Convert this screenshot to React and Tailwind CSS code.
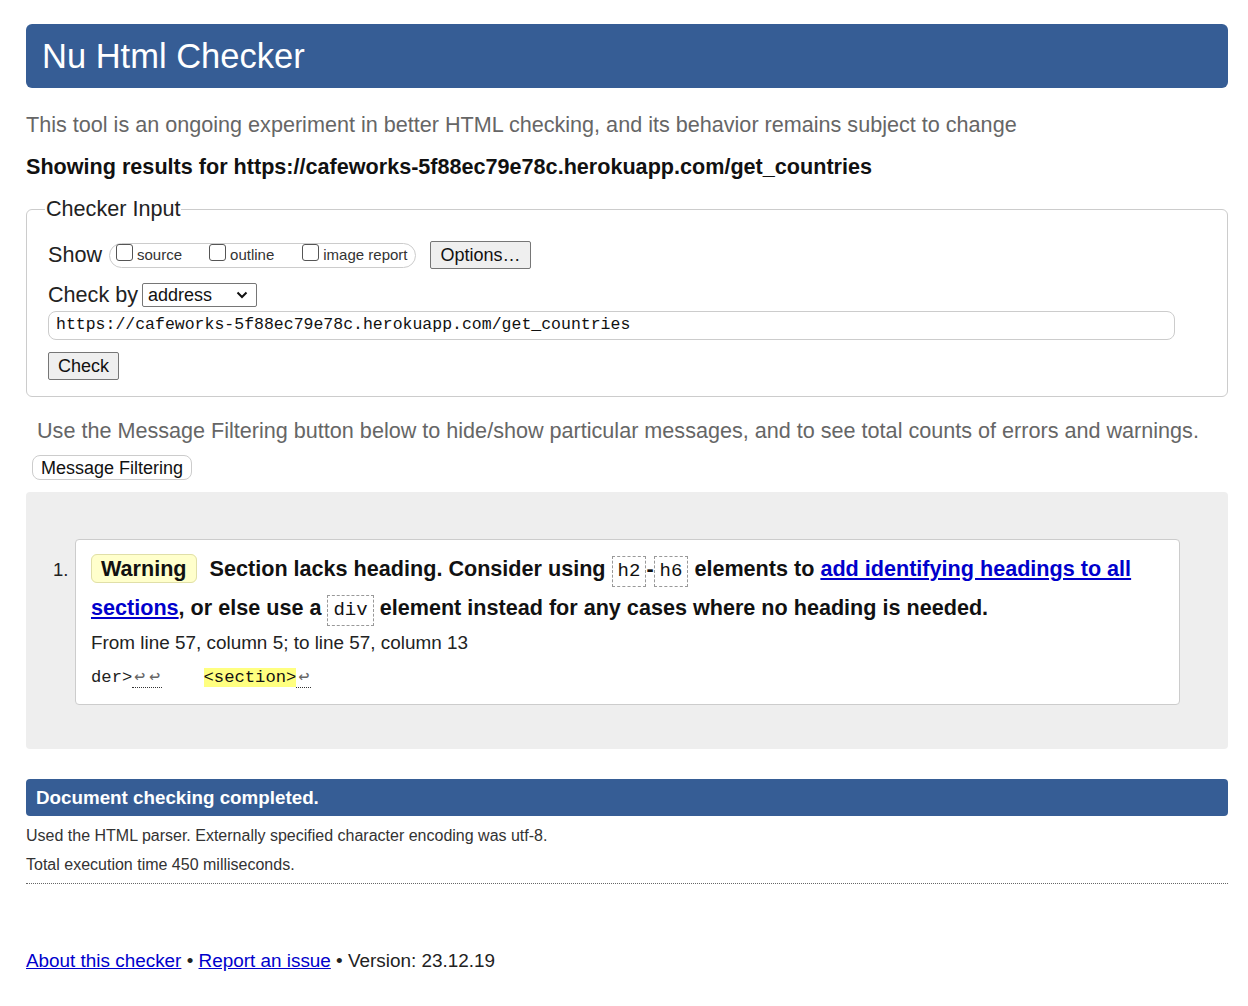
import React from "react";

const sans = { fontFamily: '"Liberation Sans", Arial, sans-serif' };

function Code({ children }) {
  return (
    <code className="inline-block border border-dashed border-[#999] bg-white px-[5px] leading-[29px] font-['Liberation_Mono',monospace] text-[19px] font-normal">
      {children}
    </code>
  );
}

function Box() {
  return <span className="mb-[5px] inline-block h-[17px] w-[17px] shrink-0 rounded-[3px] border border-[#555] bg-white" />;
}

function Ret() {
  return <span className="inline-block w-[15px] text-center text-[18px] leading-[20px] text-[#666]">↩</span>;
}

export default function App() {
  return (
    <div
      className="min-h-screen bg-white pl-[26px] pr-[20px] pt-[24px] text-[#111]"
      style={sans}
    >
      {/* Header */}
      <h1 className="h-[64px] rounded-[6px] bg-[#365d95] px-[16px] text-[34.5px] leading-[64px] text-white">
        Nu Html Checker
      </h1>

      <p className="mt-[24px] text-[21.6px] leading-[26px] text-[#666]">
        This tool is an ongoing experiment in better HTML checking, and its behavior remains subject to change
      </p>
      <p className="mt-[16px] text-[21.6px] font-bold leading-[26px] text-[#111]">
        Showing results for https://cafeworks-5f88ec79e78c.herokuapp.com/get_countries
      </p>

      {/* Checker input */}
      <fieldset className="mt-[17px] rounded-[6px] border border-[#ccc] px-[21px] pb-[16px] pt-[20px]">
        <legend className="-ml-[3px] px-[1px] text-[21.6px] leading-[24px] text-[#222]">Checker Input</legend>
        <div className="flex items-center">
          <span className="mr-[7px] text-[21.6px] leading-[26px] text-[#222]">Show</span>
          <div className="flex h-[25px] items-center rounded-full border border-[#ccc] pl-[6px] pr-[8px] text-[15px] text-[#333]">
            <label className="flex items-end gap-[4px]">
              <Box />
              <span>source</span>
            </label>
            <label className="ml-[27px] flex items-end gap-[4px]">
              <Box />
              <span>outline</span>
            </label>
            <label className="ml-[28px] flex items-end gap-[4px]">
              <Box />
              <span>image report</span>
            </label>
          </div>
          <button className="ml-[14px] h-[28px] rounded-[2px] border border-[#767676] bg-[#efefef] px-[9px] text-[18px] leading-[24px] text-[#111]">
            Options…
          </button>
        </div>
        <div className="mt-[11px] flex items-center gap-[4px]">
          <span className="text-[21.6px] leading-[30px] text-[#222]">Check by</span>
          <div className="flex h-[24px] w-[115px] items-center justify-between rounded-[2px] border border-[#767676] pl-[5px] pr-[8px] text-[18px]">
            <span>address</span>
            <svg width="12" height="8" viewBox="0 0 12 8" fill="none" stroke="#111" strokeWidth="2">
              <path d="M1.5 1.5 6 6l4.5-4.5" />
            </svg>
          </div>
        </div>
        <div className="mr-[31px] mt-[1px] flex h-[29px] items-center rounded-[8px] border border-[#ccc] px-[7px] font-['Liberation_Mono',monospace] text-[16.5px] text-[#111]">
          https://cafeworks-5f88ec79e78c.herokuapp.com/get_countries
        </div>
        <button className="mt-[12px] h-[28px] rounded-[2px] border border-[#767676] bg-[#efefef] px-[9px] text-[18px] leading-[24px] text-[#111]">
          Check
        </button>
      </fieldset>

      <p className="mt-[21px] pl-[11px] text-[21.6px] leading-[26px] text-[#666]">
        Use the Message Filtering button below to hide/show particular messages, and to see total counts of errors and warnings.
      </p>
      <button className="ml-[6px] mt-[11px] h-[25px] rounded-[8px] border border-[#ccc] bg-white px-[8px] text-[18px] leading-[22px] text-[#111]">
        Message Filtering
      </button>

      {/* Results */}
      <div className="mt-[11px] rounded-[4px] bg-[#eeeeee] pb-[44px] pl-[27px] pr-[48px] pt-[47px]">
        <div className="flex">
          <div className="w-[22px] pt-[17px] text-[18.5px] text-[#222]">1.</div>
          <div className="flex-1 rounded-[4px] border border-[#ccc] bg-white pb-[14px] pl-[15px] pr-[20px] pt-[9px]">
            <p className="text-[21.6px] font-bold leading-[39px] text-[#111]">
              <span className="mr-[13px] rounded-[6px] border border-[#e0dfa8] bg-[#ffffcc] px-[9px] py-[1px]">
                Warning
              </span>
              Section lacks heading. Consider using <Code>h2</Code>-<Code>h6</Code> elements to{" "}
              <a href="#" className="text-[#0000cc] underline">
                add identifying headings to all sections
              </a>
              , or else use a <Code>div</Code> element instead for any cases where no heading is needed.
            </p>
            <p className="mt-[4px] text-[18.9px] leading-[24px] text-[#222]">
              From line 57, column 5; to line 57, column 13
            </p>
            <p className="mt-[11px] whitespace-pre font-['Liberation_Mono',monospace] text-[17.2px] leading-[24px] text-[#222]">
              der&gt;
              <span className="border-b border-dotted border-[#333]">
                <Ret />
                <Ret />
              </span>
              {"    "}
              <span className="bg-[#ffff80] text-[#111]">&lt;section&gt;</span>
              <span className="border-b border-dotted border-[#333]">
                <Ret />
              </span>
            </p>
          </div>
        </div>
      </div>

      <div className="mt-[30px] h-[37px] rounded-[4px] bg-[#365d95] px-[10px] text-[18.8px] font-bold leading-[37px] text-white">
        Document checking completed.
      </div>
      <p className="mt-[10px] text-[16px] leading-[20px] text-[#333]">
        Used the HTML parser. Externally specified character encoding was utf-8.
      </p>
      <p className="mt-[9px] text-[16px] leading-[20px] text-[#333]">
        Total execution time 450 milliseconds.
      </p>
      <div className="mt-[8px] border-b border-dotted border-[#666]" />

      <p className="mt-[65px] text-[18.9px] leading-[24px] text-[#222]">
        <a href="#" className="text-[#0000cc] underline">About this checker</a> •{" "}
        <a href="#" className="text-[#0000cc] underline">Report an issue</a> • Version: 23.12.19
      </p>
    </div>
  );
}
